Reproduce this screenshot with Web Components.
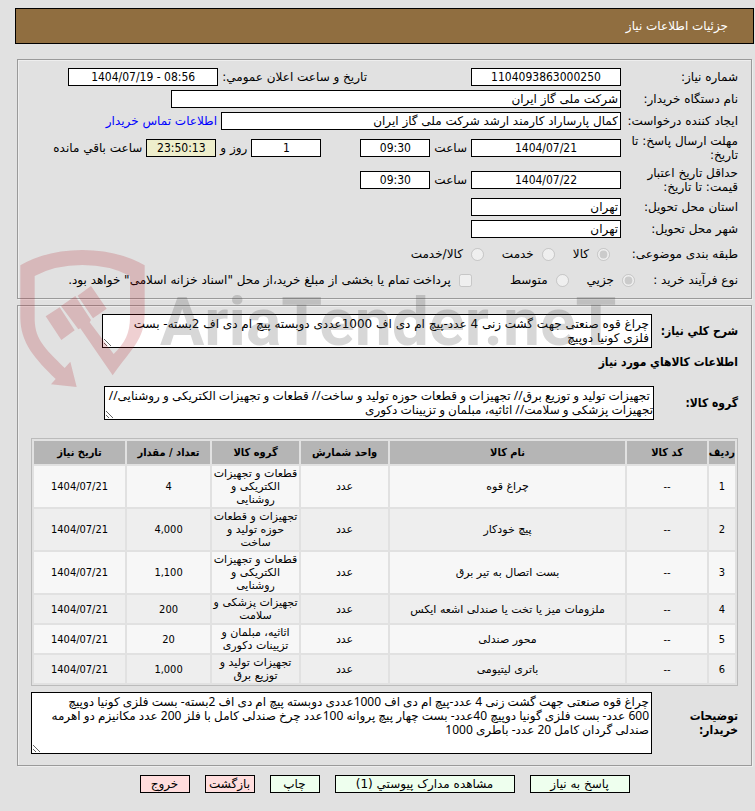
<!DOCTYPE html>
<html lang="fa" dir="rtl">
<head>
<meta charset="utf-8">
<title>جزئیات اطلاعات نیاز</title>
<style>
  body {
    margin: 0;
    background: #e1e1e1;
    color: #000;
    font: 12px/14px "DejaVu Sans", Tahoma, sans-serif;
    --condensed: "DejaVu Sans Condensed", "DejaVu Sans", Tahoma, sans-serif;
    --prose: "Noto Sans", "DejaVu Sans", Tahoma, sans-serif;
  }
</style>
</head>
<body>
<need-page></need-page>

<script>
const define = (name, html, setup) => {
  const template = document.createElement('template');
  template.innerHTML = html;

  customElements.define(name, class extends HTMLElement {
    constructor() {
      super();
      this.attachShadow({ mode: 'open' });
      this.shadowRoot.appendChild(template.content.cloneNode(true));
    }

    connectedCallback() {
      if (setup && !this.ready) {
        this.ready = true;
        setup(this, this.shadowRoot);
      }
    }
  });
};

define('page-title', `
  <style>
    :host {
      display: block;
      border: 1px solid #000;
      background: #906e40;
      color: #fff;
    }

    h1 {
      margin: 0;
      padding: 10px 25px;
      font-size: 12px;
      font-weight: normal;
      line-height: 14px;
    }
  </style>
  <h1><slot></slot></h1>
`);

define('need-panel', `
  <style>
    :host {
      display: block;
      margin: 0 2px;
    }

    .panel {
      border: 1px solid #9a9a9a;
      box-shadow: inset 1px 1px #eee, 1px 1px #eee;
      padding: 8px 13px;
      display: flex;
      flex-direction: column;
      gap: 4px;
    }
  </style>
  <div class="panel"><slot></slot></div>
`);

define('form-row', `
  <style>
    :host {
      display: flex;
      align-items: center;
      gap: 4px;
    }
  </style>
  <slot></slot>
`);

// one read-only value, with its label before or after the box
define('form-field', `
  <style>
    :host {
      display: flex;
      align-items: center;
      gap: 4px;
    }

    :host([lead]) {
      gap: 0;
    }

    label {
      white-space: nowrap;
    }

    :host([lead]) label {
      width: 117px;
      white-space: normal;
    }

    input {
      box-sizing: border-box;
      height: 18px;
      margin: 0;
      padding: 0 2px;
      border: 1px solid #000;
      background: #fff;
      color: #000;
      font: inherit;
    }

    :host([center]) input {
      font-family: var(--condensed);
      text-align: center;
    }

    :host([date]) input {
      direction: ltr;
    }

    :host([timer]) input {
      background: #eec;
    }
  </style>
  <label for="value"></label>
  <input id="value" type="text" readonly>
`, (el, root) => {
  const label = root.querySelector('label');
  const input = root.querySelector('input');
  label.textContent = el.getAttribute('label');
  input.value = el.getAttribute('value');
  input.style.width = el.getAttribute('size') + 'px';
  if (el.hasAttribute('after')) {
    root.append(label);
  }
});

define('choice-row', `
  <style>
    :host {
      display: flex;
      align-items: center;
      height: 24px;
    }

    :host([short]) {
      height: 20px;
    }

    .name {
      width: 128px;
    }

    :host([short]) .name {
      width: 103px;
    }

    .options {
      display: flex;
      align-items: center;
      gap: 18px;
    }

    .option {
      display: flex;
      align-items: center;
      gap: 8px;
      white-space: nowrap;
    }

    .option:has([type=checkbox]) {
      margin-inline-start: 20px;
    }

    input {
      width: 13px;
      height: 13px;
      margin: 0;
    }
  </style>
  <span class="name" id="name"></span>
  <div class="options" role="group" aria-labelledby="name"></div>
`, (el, root) => {
  root.querySelector('.name').textContent = el.getAttribute('label');
  const options = root.querySelector('.options');
  const add = (text, type, index) => {
    const option = document.createElement('div');
    option.className = 'option';
    option.innerHTML = `<input type="${type}" name="choice" id="o${index}" disabled><label for="o${index}"></label>`;
    option.querySelector('label').textContent = text;
    option.querySelector('input').checked = index === 0;
    options.append(option);
  };
  el.getAttribute('options').split('|').forEach((text, i) => add(text, 'radio', i));
  if (el.hasAttribute('check')) {
    add(el.getAttribute('check'), 'checkbox', 9);
  }
});

define('text-block', `
  <style>
    :host {
      display: flex;
      align-items: center;
    }

    label {
      box-sizing: border-box;
      flex: 0 0 86px;
      font-family: var(--condensed);
      font-weight: bold;
    }

    :host([close]) label {
      flex-basis: 84px;
    }

    textarea {
      box-sizing: border-box;
      flex: 0 1 550px;
      min-width: 0;
      height: 34px;
      margin: 0;
      padding: 2px;
      border: 1px solid #000;
      background: #fff;
      color: #000;
      font: inherit;
      overflow: hidden;
    }

    :host([close]) textarea,
    :host([large]) textarea {
      font-family: var(--prose);
    }

    :host([close]) textarea {
      padding: 2px 0;
    }

    :host([large]) textarea {
      flex: 1;
      height: 62px;
    }
  </style>
  <label for="text"></label>
  <textarea id="text" readonly></textarea>
`, (el, root) => {
  root.querySelector('label').textContent = el.getAttribute('label');
  root.querySelector('textarea').value = el.getAttribute('value');
});

define('goods-table', `
  <style>
    :host {
      display: block;
    }

    table {
      width: 100%;
      table-layout: fixed;
      border: 1px solid #bbb;
      border-spacing: 2px;
      font-size: 11px;
      line-height: 13px;
      text-align: center;
    }

    th, td {
      padding: 1px;
    }

    th {
      padding: 5px 0;
      background: #b5b5b5;
      font-family: var(--condensed);
      white-space: nowrap;
    }

    td {
      background: #f7f7f7;
    }

    td.number {
      font-family: var(--condensed);
    }

    tr:nth-child(even) td {
      background: #eee;
    }
  </style>
  <table>
    <colgroup></colgroup>
    <thead><tr></tr></thead>
    <tbody></tbody>
  </table>
`, (el, root) => {
  const columns = [
    ['ردیف', 26], ['کد کالا', 80], ['نام کالا', 235], ['واحد شمارش', 87],
    ['گروه کالا', 87], ['تعداد / مقدار', 83], ['تاریخ نیاز', 91]
  ];
  const goods = [
    ['چراغ قوه', 'قطعات و تجهیزات الکتریکی و روشنایی', '4'],
    ['پیچ خودکار', 'تجهیزات و قطعات حوزه تولید و ساخت', '4,000'],
    ['بست اتصال به تیر برق', 'قطعات و تجهیزات الکتریکی و روشنایی', '1,100'],
    ['ملزومات میز یا تخت یا صندلی اشعه ایکس', 'تجهیزات پزشکی و سلامت', '200'],
    ['محور صندلی', 'اثاثیه، مبلمان و تزیینات دکوری', '20'],
    ['باتری لیتیومی', 'تجهیزات تولید و توزیع برق', '1,000']
  ];
  const total = columns.reduce((sum, column) => sum + column[1], 0);
  const cell = text => `<td${/^[\d,/-]+$/.test(text) ? ' class="number"' : ''}>${text}</td>`;
  root.querySelector('colgroup').innerHTML = columns
    .map(([, width]) => `<col style="width: ${Math.round(width / total * 10000) / 100}%">`).join('');
  root.querySelector('thead tr').innerHTML = columns
    .map(([name]) => `<th scope="col">${name}</th>`).join('');
  root.querySelector('tbody').innerHTML = goods
    .map(([name, group, count], i) => `<tr>${
      [i + 1, '--', name, 'عدد', group, count, '1404/07/21'].map(cell).join('')
    }</tr>`).join('');
});

define('action-button', `
  <style>
    :host {
      display: block;
    }

    button {
      display: flex;
      align-items: center;
      justify-content: center;
      box-sizing: border-box;
      width: 50px;
      height: 18px;
      padding: 0;
      border: 1px solid #000;
      background: #efe;
      color: #000;
      font: inherit;
      white-space: nowrap;
    }

    :host([wide]) button {
      width: 100px;
    }

    :host([widest]) button {
      width: 180px;
    }

    :host([back]) button {
      background: #fdd;
    }
  </style>
  <button type="button"><slot></slot></button>
`);

define('site-watermark', `
  <style>
    :host {
      display: flex;
      align-items: flex-start;
      gap: 15px;
      direction: ltr;
      pointer-events: none;
    }

    svg {
      width: 125px;
      height: 137px;
      fill: rgba(175, 20, 30, 0.2);
    }

    span {
      margin-top: 28px;
      color: rgba(55, 55, 55, 0.2);
      font: bold 66px/90px Roboto, "Liberation Sans", sans-serif;
      white-space: nowrap;
    }
  </style>
  <svg viewBox="30 30 375 411" aria-hidden="true">
    <path d="M31 76Q110 30 217 30T404 76V220C404 300 365 325 308 406L211 265L205 268L153 198L196 168L243 240L239 247L311 342C345 308 360 280 360 230V108Q300 75 217 75T74 108V240C76 300 105 325 164 384L181 365L200 441L123 433L137 417C75 355 31 310 31 230Z"/>
    <path d="M203 167L243 138L290 206L249 235ZM107 229L149 202L194 271L154 300Z"/>
  </svg>
  <span>AriaTender.neT</span>
`);

define('need-page', `
  <style>
    :host {
      display: block;
      position: relative;
      padding: 8px 1px 18px 15px;
    }

    need-panel.info {
      margin-top: 15px;
    }

    need-panel.goods {
      margin-top: 6px;
    }

    h2 {
      margin: 3px 0 13px;
      font-family: var(--condensed);
      font-size: 12px;
      line-height: 14px;
    }

    .public {
      margin-inline-start: 100px;
    }

    .days {
      margin-inline-start: 35px;
    }

    a {
      color: #00f;
      text-decoration: none;
    }

    goods-table {
      margin: 14px 0 2px;
    }

    .explain {
      margin-bottom: 3px;
    }

    .actions {
      display: flex;
      justify-content: center;
      gap: 15px;
      margin-top: 9px;
    }

    site-watermark {
      position: absolute;
      left: 20px;
      top: 250px;
    }
  </style>

  <page-title>جزئیات اطلاعات نیاز</page-title>

  <need-panel class="info">
    <form-row>
      <form-field lead center label="شماره نیاز:" value="1104093863000250" size="150"></form-field>
      <form-field class="public" center date label="تاریخ و ساعت اعلان عمومي:" value="1404/07/19 - 08:56" size="150"></form-field>
    </form-row>
    <form-row>
      <form-field lead label="نام دستگاه خریدار:" value="شرکت ملی گاز ایران" size="450"></form-field>
    </form-row>
    <form-row>
      <form-field lead label="ایجاد کننده درخواست:" value="کمال پارساراد کارمند ارشد شرکت ملی گاز ایران" size="400"></form-field>
      <a href="#contact">اطلاعات تماس خریدار</a>
    </form-row>
    <form-row>
      <form-field lead center label="مهلت ارسال پاسخ: تا تاریخ:" value="1404/07/21" size="150"></form-field>
      <form-field center label="ساعت" value="09:30" size="70"></form-field>
      <form-field class="days" center after label="روز و" value="1" size="70"></form-field>
      <form-field timer center after label="ساعت باقي مانده" value="23:50:13" size="70"></form-field>
    </form-row>
    <form-row>
      <form-field lead center label="حداقل تاریخ اعتبار قیمت: تا تاریخ:" value="1404/07/22" size="150"></form-field>
      <form-field center label="ساعت" value="09:30" size="70"></form-field>
    </form-row>
    <form-row>
      <form-field lead label="استان محل تحویل:" value="تهران" size="150"></form-field>
    </form-row>
    <form-row>
      <form-field lead label="شهر محل تحویل:" value="تهران" size="150"></form-field>
    </form-row>
    <choice-row label="طبقه بندی موضوعی:" options="کالا|خدمت|کالا/خدمت"></choice-row>
    <choice-row short label="نوع فرآیند خرید :" options="جزیي|متوسط" check='پرداخت تمام یا بخشی از مبلغ خرید،از محل "اسناد خزانه اسلامی" خواهد بود.'></choice-row>
  </need-panel>

  <need-panel class="goods">
    <text-block label="شرح کلي نیاز:" value="چراغ قوه صنعتی جهت گشت زنی 4 عدد-پیچ ام دی اف 1000عددی دوبسته پیچ ام دی اف 2بسته- بست فلزی کونیا دوپیچ"></text-block>
    <h2>اطلاعات کالاهاي مورد نیاز</h2>
    <text-block close label="گروه کالا:" value=" تجهیزات تولید و توزیع برق// تجهیزات و قطعات حوزه تولید و ساخت// قطعات و تجهیزات الکتریکی و روشنایی// تجهیزات پزشکی و سلامت// اثاثیه، مبلمان و تزیینات دکوری"></text-block>
    <goods-table></goods-table>
    <text-block large class="explain" label="توضیحات خریدار:" value="چراغ قوه صنعتی جهت گشت زنی 4 عدد-پیچ ام دی اف 1000عددی دوبسته پیچ ام دی اف 2بسته- بست فلزی کونیا دوپیچ&#10;600 عدد- بست فلزی گونیا دوپیچ 40عدد- بست چهار پیچ پروانه 100عدد چرخ صندلی کامل با فلز 200 عدد مکانیزم دو اهرمه صندلی گردان کامل 20 عدد- باطری 1000"></text-block>
  </need-panel>

  <div class="actions">
    <action-button wide>پاسخ به نیاز</action-button>
    <action-button widest>مشاهده مدارک پیوستي (1)</action-button>
    <action-button>چاپ</action-button>
    <action-button back>بازگشت</action-button>
    <action-button back>خروج</action-button>
  </div>

  <site-watermark></site-watermark>
`);
</script>
</body>
</html>
